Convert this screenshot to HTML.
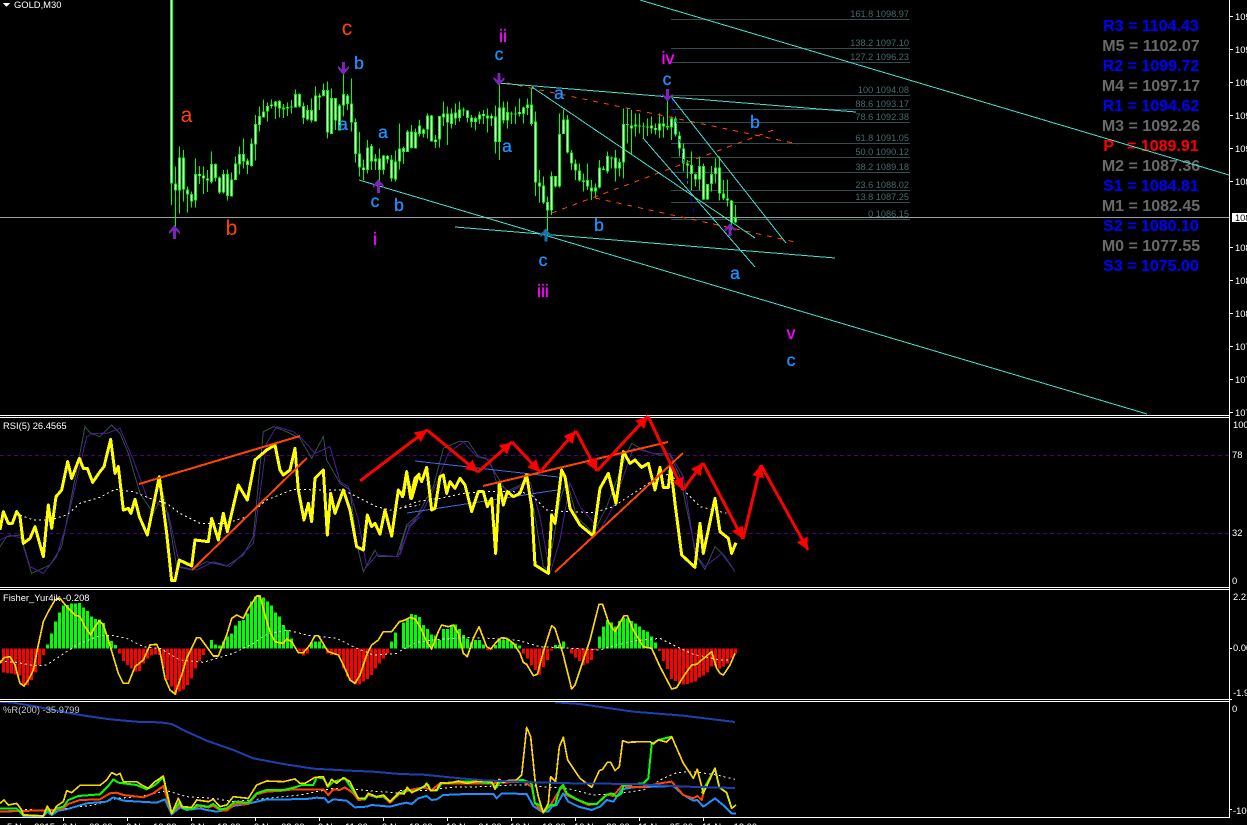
<!DOCTYPE html>
<html><head><meta charset="utf-8"><title>GOLD,M30</title>
<style>
html,body{margin:0;padding:0;background:#000;overflow:hidden}
svg{display:block;position:absolute;left:0;top:0}
text{font-family:"Liberation Sans",sans-serif}
.s{font-size:9.4px;fill:#fff}
.f{font-size:9.2px;fill:#466a6a;text-anchor:end}
.o{font-size:21px;fill:#ff4500;text-anchor:middle}
.b{font-size:17.5px;fill:#1e90ff;stroke:#1e90ff;stroke-width:.35px;text-anchor:middle}
.m{font-size:17.5px;fill:#ff00ff;stroke:#ff00ff;stroke-width:.35px;text-anchor:middle}
.p{font-size:16px;font-weight:bold;text-anchor:middle}
.g{fill:#696969}.u{fill:#0000ff}
</style></head><body>
<svg width="1247" height="825" viewBox="0 0 1247 825" xmlns="http://www.w3.org/2000/svg" shape-rendering="crispEdges" fill="none">
<defs>
<marker id="h" markerUnits="userSpaceOnUse" markerWidth="14" markerHeight="12" refX="12" refY="6" orient="auto"><path d="M0 0L12 6L0 12Z" fill="#ff0000"/></marker>
</defs>
<rect width="1247" height="825" fill="#000"/>

<!-- fib levels -->
<g stroke="#2f4f4f" stroke-width="1">
<path d="M671 19.5H910M671 48.5H910M671 62.5H910M671 95.5H910M671 109.5H910M671 122.5H910M671 143.5H910M671 157.5H910M671 172.5H910M671 190.5H910M671 202.5H910M671 219.5H910"/>
</g>
<g class="fl">
<text class="f" x="909" y="17">161.8 1098.97</text>
<text class="f" x="909" y="46">138.2 1097.10</text>
<text class="f" x="909" y="60">127.2 1096.23</text>
<text class="f" x="909" y="93">100 1094.08</text>
<text class="f" x="909" y="107">88.6 1093.17</text>
<text class="f" x="909" y="120">78.6 1092.38</text>
<text class="f" x="909" y="141">61.8 1091.05</text>
<text class="f" x="909" y="155">50.0 1090.12</text>
<text class="f" x="909" y="170">38.2 1089.18</text>
<text class="f" x="909" y="188">23.6 1088.02</text>
<text class="f" x="909" y="200">13.8 1087.25</text>
<text class="f" x="909" y="217">0 1086.15</text>
</g>

<!-- pivots -->
<text class="p u" x="1151" y="31">R3 = 1104.43</text>
<text class="p g" x="1151" y="51">M5 = 1102.07</text>
<text class="p u" x="1151" y="71">R2 = 1099.72</text>
<text class="p g" x="1151" y="91">M4 = 1097.17</text>
<text class="p u" x="1151" y="111">R1 = 1094.62</text>
<text class="p g" x="1151" y="131">M3 = 1092.26</text>
<text class="p" style="fill:#ff0000" x="1151" y="151" xml:space="preserve">P   = 1089.91</text>
<text class="p g" x="1151" y="171">M2 = 1087.36</text>
<text class="p u" x="1151" y="191">S1 = 1084.81</text>
<text class="p g" x="1151" y="211">M1 = 1082.45</text>
<text class="p u" x="1151" y="231">S2 = 1080.10</text>
<text class="p g" x="1151" y="251">M0 = 1077.55</text>
<text class="p u" x="1151" y="271">S3 = 1075.00</text>

<!-- price line -->
<path d="M0 217.5H1229" stroke="#98a0a0" stroke-width="1"/>

<!-- candles part 1 -->
<g transform="translate(150.17,0) scale(.33333)">
<path stroke="#00ff00" stroke-width="3" d="M64 0V615M76 500V690M88 440V640M100 450V605M112 560V638M124 575V622M136 475V622M148 498V552M160 500V582M172 510V576M184 454V550M196 490V545M208 530V582M220 510V580M232 508V602M244 518V590M256 470V540M268 440V524M280 415V505M292 475V522M304 415V500M316 345V482M328 320V395M340 298V352M352 308V365M364 298V325M376 303V357M388 300V352M400 312V354M412 308V348M424 300V340M436 268V322M448 280V322M460 308V372M472 315V362M484 295V368M496 260V365M508 280V330M520 250V290M532 245V416M544 265V402M556 295V390M568 312V392M580 210V350M592 282V330M604 235V395M616 355V488M628 396V530M640 478V540M652 420V520M664 432V510M676 462V510M688 445V560M700 465V524M712 465V490M724 465V545M736 452V545M748 370V508M760 440V492M772 390V456M784 375V445M796 385V446M808 360V410M820 385V412M832 340V415M844 345V425M856 405V444M868 348V442M880 305V378M892 320V435M904 325V385M916 310V375M928 305V365M940 322V348M952 330V368M964 345V382M976 350V392M988 335V372M1000 330V372M1012 325V398M1024 340V378M1036 316V460M1048 240V480M1060 305V370M1072 305V385M1084 335V372M1096 320V372M1108 295V350M1120 320V370M1132 295V345M1144 262V378M1156 335V588M1168 510V608M1180 530V612M1192 590V710"/>
<path stroke="#00ff00" stroke-width="9" d="M64 0V550M76 550V572M88 472V572M100 472V568M112 568V584M124 582V605M136 522V602M148 522V528M160 526V536M172 535V542M184 492V546M196 492V534M208 532V578M220 522V578M232 522V588M244 538V590M256 490V540M268 462V494M280 462V484M292 482V495M304 430V498M316 372V434M328 348V375M340 334V352M352 318V335M364 313V318M376 305V320M388 303V326M400 323V328M412 321V326M424 320V322M436 282V322M448 282V320M460 318V354M472 330V358M484 330V362M496 286V365M508 286V292M520 270V288M532 270V398M544 294V402M556 294V362M568 316V392M580 282V316M592 286V312M604 310V368M616 366V462M628 460V502M640 502V510M652 442V510M664 438V484M676 475V485M688 475V510M700 466V510M712 468V478M724 478V536M736 484V538M748 446V485M760 444V456M772 394V456M784 394V444M796 396V446M808 376V402M820 388V402M832 346V388M844 346V424M856 418V426M868 348V418M880 340V352M892 340V368M904 340V372M916 338V356M928 328V354M940 328V332M952 332V354M964 352V366M976 354V366M988 344V358M1000 342V348M1012 346V356M1024 348V356M1036 350V426M1048 322V426M1060 322V362M1072 336V362M1084 340V344M1096 340V344M1108 336V342M1120 322V342M1132 313V324M1144 313V372M1156 364V548M1168 548V560M1180 556V608M1192 606V632"/>
<path stroke="#ffffff" stroke-width="3" d="M64 0V547M76 553V569M88 475V569M100 475V565M112 571V581M124 585V602M136 525V599M148 524V526M160 528V534M172 537V540M184 495V543M196 495V531M208 535V575M220 525V575M232 525V585M244 541V587M256 493V537M268 465V491M280 465V481M292 485V492M304 433V495M316 375V431M328 351V372M340 337V349M352 321V332M364 315V316M376 308V317M388 306V323M400 325V326M412 323V324M436 285V319M448 285V317M460 321V351M472 333V355M484 333V359M496 289V362M508 288V290M520 273V285M532 273V395M544 297V399M556 297V359M568 319V389M580 285V313M592 289V309M604 313V365M616 369V459M628 463V499M640 504V508M652 445V507M664 441V481M676 478V482M688 478V507M700 469V507M712 470V476M724 481V533M736 487V535M748 449V482M760 447V453M772 397V453M784 397V441M796 399V443M808 379V399M820 391V399M832 349V385M844 349V421M856 420V424M868 351V415M880 343V349M892 343V365M904 343V369M916 341V353M928 331V351M940 330V330M952 335V351M964 355V363M976 357V363M988 347V355M1000 344V346M1012 349V353M1024 350V354M1036 353V423M1048 325V423M1060 325V359M1072 339V359M1108 338V340M1120 325V339M1132 316V321M1144 316V369M1156 367V545M1168 551V557M1180 559V605M1192 609V629"/>
</g>

<!-- candles part 2 -->
<g transform="translate(499.5,0) scale(.33333)">
<path stroke="#00ff00" stroke-width="3" d="M156 515V645M168 528V562M180 340V562M192 328V402M204 345V460M216 450V510M228 478V540M240 490V545M252 520V575M264 490V570M276 540V600M288 550V595M300 480V565M312 498V510M324 455V520M336 470V505M348 450V545M360 475V530M372 325V535M384 325V430M396 330V465M408 340V410M420 340V400M432 368V415M444 355V408M456 350V400M468 370V404M480 340V414M492 350V412M504 290V390M516 350V420M528 350V410M540 395V470M552 430V515M564 480V550M576 455V570M588 520V560M600 470V570M612 490V600M624 552V600M636 498V575M648 475V550M660 470V602M672 540V600M684 538V620M696 600V690M708 615V670"/>
<path stroke="#00ff00" stroke-width="9" d="M156 528V632M168 528V560M180 402V560M192 358V402M204 358V458M216 458V490M228 490V512M240 512V542M252 542V546M264 540V560M276 562V575M288 562V575M300 502V562M312 506V510M324 468V515M336 472V476M348 472V505M360 486V506M372 372V488M384 372V375M396 376V386M408 374V380M420 376V380M432 380V381M444 380V382M456 376V385M468 384V390M480 370V392M492 370V380M504 378V382M516 355V382M528 355V404M540 406V445M552 446V490M564 490V496M576 495V522M588 522V538M600 498V538M612 498V598M624 552V598M636 522V552M648 502V522M660 502V580M672 580V596M684 596V602M696 602V668M708 652V668"/>
<path stroke="#ffffff" stroke-width="3" d="M156 531V629M168 531V557M180 405V557M192 361V399M204 361V455M216 461V487M228 493V509M240 515V539M264 543V557M276 565V572M288 565V572M300 505V559M324 471V512M348 475V502M360 489V503M372 375V485M396 379V383M408 376V378M420 378V378M456 378V383M468 386V388M480 373V389M492 373V377M516 358V379M528 358V401M540 409V442M552 449V487M564 492V494M576 498V519M588 525V535M600 501V535M612 501V595M624 555V595M636 525V549M648 505V519M660 505V577M672 583V593M684 598V600M696 605V665M708 655V665"/>
</g>

<!-- dark blue dashed -->
<path d="M672 100L695 218" stroke="#0000dd" stroke-width="1" stroke-dasharray="4 6"/>

<!-- orange dashed -->
<g stroke="#ff4500" stroke-width="1" stroke-dasharray="5 6">
<path d="M507 83L798 144"/>
<path d="M552 213L776 129"/>
<path d="M595 198L795 242"/>
</g>

<!-- cyan trend lines -->
<g stroke="#40e0d0" stroke-width="1">
<path d="M640 0L1229 175"/>
<path d="M359 180L1147 414"/>
<path d="M455 227L835 258"/>
<path d="M497 83L856 112"/>
<path d="M532 87L755 238"/>
<path d="M643 138L755 267"/>
<path d="M672 98L786 243"/>
</g>

<!-- wave arrows -->
<g transform="translate(150,0) scale(.33333)" fill="#7b24b8">
<path d="M73 675L90 695V702L78 692V717H69V692L57 702V695Z"/>
<path d="M685 537L702 557V564L690 554V579H681V554L669 564V557Z"/>
<path d="M580 225L597 205V198L585 208V186H576V208L564 198V205Z"/>
<path d="M1047 258L1064 238V231L1052 241V219H1043V241L1031 231V238Z"/>
<path fill="#1a6fae" d="M1187 685L1204 705V712L1192 702V725H1183V702L1171 712V705Z"/>
</g>
<g transform="translate(500,0) scale(.33333)" fill="#7b24b8">
<path d="M502 305L519 285V282L507 289V267H498V289L486 282V285Z"/>
<path d="M690 670L707 688V694L695 686V708H686V686L674 694V688Z"/>
</g>

<!-- wave labels -->
<text class="o" x="186.500" y="122">a</text>
<text class="o" x="347" y="35">c</text>
<text class="o" x="231.500" y="235">b</text>
<text class="b" x="359" y="69">b</text>
<text class="b" x="343" y="130">a</text>
<text class="b" x="383" y="138">a</text>
<text class="b" x="375" y="207">c</text>
<text class="b" x="399" y="211">b</text>
<text class="b" x="499" y="60">c</text>
<text class="b" x="507" y="152">a</text>
<text class="b" x="543" y="266">c</text>
<text class="b" x="559" y="99">a</text>
<text class="b" x="599" y="231">b</text>
<text class="b" x="667" y="85">c</text>
<text class="b" x="755" y="128">b</text>
<text class="b" x="735" y="279">a</text>
<text class="b" x="791" y="366">c</text>
<text class="m" x="503" y="42">ii</text>
<text class="m" x="375" y="245">i</text>
<text class="m" x="543" y="297">iii</text>
<text class="m" x="668" y="64">iv</text>
<text class="m" x="791" y="339">v</text>

<text class="s" x="14" y="8">GOLD,M30</text>
<path d="M3 3H10L6.500 7Z" fill="#fff"/>

<!-- separators -->
<path d="M0 415.500H1229M0 417.500H1229M0 587.500H1229M0 589.500H1229M0 699.500H1229M0 701.500H1229M0 817.500H1229M1229.500 0V818" stroke="#fff" stroke-width="1"/>

<!-- RSI levels -->
<path d="M0 455.500H1229M0 533.500H1229" stroke="#4b0082" stroke-width="1" stroke-dasharray="4 3"/>

<!-- RSI thin lines left -->
<g transform="translate(0,410) scale(.33333)">
<polyline stroke="#2f4f4f" stroke-width="3" points="0,410 20,380 60,375 75,425 95,490 150,465 185,410 240,130 255,50 272,70 300,80 335,45 360,70 385,130 420,250 460,310 490,250 510,350 530,470 575,480 620,455 680,468 730,435 760,380 790,65 820,50 860,65 900,85 935,145 970,80 980,150 1020,220 1050,240 1070,400 1090,485 1125,420 1135,440 1190,440 1220,345 1260,310"/>
<polyline stroke="#4b1a96" stroke-width="3" points="0,390 30,375 65,385 90,470 130,490 170,440 200,340 260,80 280,70 320,70 360,55 400,150 440,260 475,280 505,310 540,470 590,480 640,455 690,470 760,400 800,100 830,50 880,65 905,85 945,130 990,110 1020,215 1045,230 1075,330 1100,470 1130,435 1195,440 1230,350 1260,320"/>
<polyline stroke="#fff8dc" stroke-width="3" stroke-dasharray="6 9" points="60,315 100,330 150,330 200,315 240,280 300,262 345,238 400,245 450,265 500,280 540,310 600,340 680,340 740,320 800,270 880,238 960,240 1030,240 1070,260 1130,290 1170,300 1230,290 1260,285"/>
</g>
<g transform="translate(400,410) scale(.33333)">
<polyline stroke="#2f4f4f" stroke-width="3" points="0,420 20,350 40,340 80,265 100,230 130,115 175,95 205,95 235,140 260,145 280,180 320,245 350,230 380,215 400,290 430,470 445,480 480,270 500,210 530,320 580,370 620,290 680,130 695,100 730,120 775,135 810,135 840,200 890,440 915,478 945,410 975,440 1005,485"/>
<polyline stroke="#4b1a96" stroke-width="3" points="0,435 30,345 70,300 110,220 145,130 190,95 230,140 270,150 290,220 330,245 390,215 420,320 450,490 480,390 510,220 540,290 600,360 640,290 670,200 700,115 760,130 810,130 850,200 885,430 915,470 965,430 1005,485"/>
<polyline stroke="#fff8dc" stroke-width="3" stroke-dasharray="6 9" points="0,295 50,275 120,265 190,250 260,245 340,245 390,250 440,300 500,305 580,308 640,290 700,250 760,210 810,190 860,250 900,290 980,310"/>
</g>

<!-- RSI blue trend -->
<g stroke="#4169e1" stroke-width="1">
<path d="M415 461L558 477"/>
<path d="M407 513L557 490"/>
</g>

<!-- RSI yellow -->
<g transform="translate(0,410) scale(.33333)">
<polyline stroke="#ffff00" stroke-width="9" stroke-linejoin="round" points="0,360 10,305 25,340 37,340 50,305 60,320 70,400 90,385 105,350 130,440 145,285 155,355 168,260 185,240 203,155 215,205 238,145 250,175 262,175 278,217 300,185 312,170 332,88 345,190 355,170 370,300 385,295 393,310 405,268 418,320 442,375 478,200 500,370 515,512 525,512 538,450 575,468 585,390 625,395 635,325 655,390 670,310 682,365 715,225 742,270 765,150 800,120 825,105 840,180 850,195 870,180 885,115 895,240 912,330 925,280 935,335 945,205 970,180 982,375 992,250 1005,310 1030,240 1050,300 1070,410 1090,420 1102,315 1115,350 1125,340 1140,372 1155,300 1175,378 1195,240 1208,260 1220,185 1232,265 1245,205 1260,190"/>
</g>
<g transform="translate(400,410) scale(.33333)">
<polyline stroke="#ffff00" stroke-width="9" stroke-linejoin="round" points="0,245 10,255 20,190 35,265 55,195 65,215 80,172 95,300 105,295 120,200 130,195 140,250 150,215 165,235 180,205 195,225 215,305 235,245 250,245 262,290 275,265 287,430 298,220 310,285 322,245 340,260 360,250 380,195 395,290 405,465 445,490 455,315 465,340 485,180 495,200 510,295 540,345 580,378 600,235 625,190 648,280 670,125 690,160 705,150 725,172 745,160 765,240 780,172 790,232 805,232 812,170 825,280 845,435 885,472 900,340 910,430 945,265 960,365 985,385 995,430 1008,398"/>
</g>

<!-- RSI orange trend -->
<g stroke="#ff4500" stroke-width="2">
<path d="M139 484L300 436"/>
<path d="M192 570L307 458"/>
<path d="M483 486L668 442"/>
<path d="M555 572L683 453"/>
</g>

<!-- RSI red arrows -->
<g stroke="#ff0000" stroke-width="3" marker-end="url(#h)">
<path d="M360 481L427 430"/>
<path d="M427 430L478 472"/>
<path d="M478 472L512 442"/>
<path d="M512 442L540 472"/>
<path d="M540 472L576 431"/>
<path d="M576 431L597 471"/>
<path d="M597 471L648 416"/>
<path d="M648 416L683 490"/>
<path d="M683 490L703 463"/>
<path d="M703 463L743 539"/>
<path d="M743 539L761 465"/>
<path d="M761 465L808 550"/>
</g>

<!-- Fisher bars, first block -->
<g transform="translate(1.5,585) scale(.33333)">
<path stroke="#ff0000" stroke-width="9" d="M6 190V262M18 190V264M30 190V266M42 190V268M54 190V272M66 190V302M78 190V300M90 190V285M102 190V262M114 190V240M126 190V210"/>
</g>
<g transform="translate(-.5,585) scale(.33333)">
<path stroke="#ff0000" stroke-width="9" d="M360 190V205M372 190V228M384 190V240M396 190V250M408 190V260M420 190V258M432 190V235M444 190V220M456 190V212M468 190V208M480 190V210M492 190V250M504 190V285M516 190V305M528 190V330M540 190V320M552 190V314M564 190V300M576 190V280M588 190V250M600 190V228M612 190V210M900 190V200M912 190V212M924 190V205M984 190V205M996 190V210M1008 190V210M1020 190V215M1032 190V250M1044 190V275M1056 190V290M1068 190V298M1080 190V298M1092 190V290M1104 190V282M1116 190V270M1128 190V250M1140 190V235M1152 190V220M1164 190V205"/>
<path stroke="#00ff00" stroke-width="9" d="M144 190V178M156 190V146M168 190V110M180 190V82M192 190V62M204 190V60M216 190V56M228 190V56M240 190V54M252 190V68M264 190V78M276 190V95M288 190V102M300 190V104M312 190V114M324 190V150M336 190V168M348 190V180M636 190V165M648 190V178M660 190V182M672 190V170M684 190V155M696 190V145M708 190V122M720 190V108M732 190V105M744 190V85M756 190V50M768 190V35M780 190V35M792 190V38M804 190V50M816 190V62M828 190V82M840 190V95M852 190V120M864 190V135M876 190V160M936 190V172M948 190V170M960 190V170M972 190V182M1176 190V170M1188 190V142"/>
</g>
<g transform="translate(0,585) scale(.33333)">
<polyline stroke="#fff8dc" stroke-width="3" stroke-dasharray="6 9" points="0,228 50,232 100,242 140,240 200,200 240,175 300,152 340,152 380,160 430,185 480,190 540,225 610,232 700,205 760,175 800,148 860,135 930,152 1010,160 1060,185 1120,210 1200,205"/>
<polyline stroke="#ffd700" stroke-width="5" stroke-linejoin="round" points="0,235 12,218 30,215 45,240 60,295 72,303 85,285 100,255 115,180 130,110 145,80 165,45 180,40 200,65 225,90 240,95 255,125 272,150 285,125 298,107 310,120 325,165 340,215 355,265 370,295 385,295 405,245 430,225 450,180 470,178 480,200 495,280 510,315 525,327 545,270 560,220 590,158 600,158 620,185 640,213 655,213 680,150 695,100 710,90 730,100 745,70 770,33 780,33 795,90 810,140 825,170 850,175 860,162 875,170 895,203 910,203 930,180 945,152 955,152 975,185 985,200 1015,210 1030,240 1050,285 1065,295 1080,270 1100,210 1115,180 1135,165 1150,140 1175,140 1200,108"/>
</g>
<!-- Fisher bars, second block -->
<g transform="translate(401.5,585) scale(.33333)">
<path stroke="#00ff00" stroke-width="9" d="M6 190V112M18 190V100M30 190V87M42 190V90M54 190V96M66 190V120M78 190V132M90 190V148M102 190V152M114 190V165M126 190V132M138 190V132M150 190V120M162 190V118M174 190V132M186 190V150M198 190V160M210 190V172M222 190V165M234 190V165M246 190V178M282 190V180M294 190V165M306 190V165M318 190V162M330 190V172M342 190V175M354 190V182M462 190V180M474 190V180M486 190V170M594 190V155M606 190V125M618 190V105M630 190V112M642 190V125M654 190V108M666 190V98M678 190V100M690 190V108M702 190V115M714 190V125M726 190V135M738 190V140M750 190V155M762 190V172"/>
<path stroke="#ff0000" stroke-width="9" d="M258 190V195M270 190V195M366 190V205M378 190V220M390 190V242M402 190V255M414 190V268M426 190V246M438 190V225M450 190V197M510 190V206M522 190V218M534 190V228M546 190V240M558 190V235M570 190V225M582 190V195M774 190V198M786 190V228M798 190V252M810 190V282M822 190V288M834 190V295M846 190V298M858 190V297M870 190V292M882 190V290M894 190V278M906 190V272M918 190V262M930 190V245M942 190V245M954 190V250M966 190V245M978 190V235M990 190V220M1002 190V205"/>
</g>
<g transform="translate(400,585) scale(.33333)">
<polyline stroke="#fff8dc" stroke-width="3" stroke-dasharray="6 9" points="0,198 50,172 100,165 200,157 270,160 350,165 420,185 520,190 600,195 650,180 700,168 780,160 830,185 880,208 960,225 990,225"/>
<polyline stroke="#ffd700" stroke-width="5" stroke-linejoin="round" points="0,110 15,105 30,97 45,102 60,125 80,170 95,192 115,140 125,120 145,125 160,120 175,145 190,205 202,215 220,160 237,125 260,185 272,192 290,170 305,158 320,160 340,175 360,205 370,232 380,238 400,272 412,268 430,200 455,122 465,130 490,210 515,312 525,300 545,240 570,165 597,58 608,58 625,110 645,140 672,92 682,92 700,135 730,185 755,190 780,245 815,312 830,308 850,275 875,240 890,238 905,225 935,200 950,250 960,265 970,270 990,240 1005,205"/>
</g>

<!-- %R -->
<g transform="translate(0,700) scale(.33333)" stroke-linejoin="round">
<polyline stroke="#1e3fb0" stroke-width="6" points="0,5 40,8 110,20 200,38 260,48 330,58 420,66 480,67 515,72 560,95 620,122 700,150 760,175 850,192 940,206 1050,212 1120,215 1200,222"/>
<polyline stroke="#fff8dc" stroke-width="3" stroke-dasharray="6 9" points="60,327 120,330 200,325 280,315 350,295 420,290 500,272 560,290 640,295 700,305 800,295 900,285 1000,265 1060,268 1200,280"/>
<polyline stroke="#1e90ff" stroke-width="6" points="0,335 60,332 70,348 130,348 142,335 155,345 175,332 200,328 260,310 320,305 340,292 370,302 420,305 470,308 495,298 515,343 540,322 560,330 600,325 620,330 650,335 680,330 700,318 740,312 800,298 860,298 920,297 950,293 975,295 985,308 1000,298 1040,302 1065,322 1100,320 1115,315 1170,320 1200,312"/>
<polyline stroke="#ff4500" stroke-width="6" points="0,335 160,330 190,325 205,312 240,300 300,298 330,280 350,278 370,285 430,292 460,280 490,258 515,340 540,315 555,325 580,325 595,318 625,322 640,318 660,330 680,332 705,312 745,312 770,283 800,275 850,272 880,268 900,268 945,268 970,268 985,285 1000,268 1020,270 1035,262 1060,280 1075,300 1095,298 1105,285 1130,292 1150,290 1170,308 1200,280"/>
<polyline stroke="#00ff00" stroke-width="6" points="0,326 50,326 70,345 130,348 142,325 155,342 170,325 190,320 205,300 235,288 300,283 325,258 340,238 355,248 370,250 410,255 440,268 465,255 490,232 515,340 540,305 550,325 580,325 590,315 625,320 640,312 660,328 680,325 705,305 745,308 770,280 800,270 850,270 885,262 905,255 940,255 950,232 970,235 985,260 1000,245 1020,240 1035,235 1055,265 1075,295 1095,298 1105,282 1130,292 1150,288 1170,305 1200,278"/>
<polyline stroke="#ffd700" stroke-width="5" points="0,310 12,300 25,315 50,310 65,330 70,345 130,348 142,318 155,342 170,318 190,305 200,272 215,278 240,256 300,256 320,240 335,218 350,225 360,220 370,245 410,245 425,255 445,265 465,245 490,228 515,340 535,295 545,320 575,322 590,300 625,305 640,298 660,320 680,315 700,290 745,295 770,255 800,243 850,245 885,237 900,250 915,250 945,232 970,230 982,260 995,238 1010,250 1030,233 1050,245 1075,295 1095,295 1105,280 1130,290 1150,285 1170,305 1200,275"/>
</g>
<g transform="translate(400,700) scale(.33333)" stroke-linejoin="round">
<polyline stroke="#fff8dc" stroke-width="3" stroke-dasharray="6 9" points="0,272 80,272 150,262 250,260 340,255 390,255 420,260 500,265 580,285 660,280 730,270 790,235 830,218 880,215 950,225 1005,238"/>
<polyline stroke="#1e90ff" stroke-width="6" points="0,312 20,308 35,312 55,295 80,288 95,300 110,298 130,285 200,282 280,282 290,295 305,280 380,282 400,318 425,335 445,335 455,320 470,315 490,280 505,305 535,320 575,330 600,320 620,300 640,305 665,268 700,262 820,258 850,285 880,302 892,300 910,320 945,295 975,320 995,340 1008,340"/>
<polyline stroke="#ff4500" stroke-width="6" points="0,282 30,270 70,262 95,270 120,250 200,250 280,250 295,248 370,245 395,260 405,310 430,338 450,318 480,268 490,262 500,285 565,315 590,312 620,283 640,288 665,258 720,262 780,250 815,245 850,285 880,295 892,288 905,300 915,260 945,205 958,262 980,278 995,325"/>
<polyline stroke="#00ff00" stroke-width="6" points="0,282 20,268 40,275 70,260 85,255 92,272 110,272 125,250 180,245 235,245 275,250 290,262 300,245 370,240 395,250 405,310 420,315 430,338 450,315 465,315 480,265 490,255 500,280 530,298 565,312 590,312 620,285 635,280 650,290 665,280 670,255 730,250 745,235 755,132 775,120 815,110"/>
<polyline stroke="#00ff00" stroke-width="6" points="905,280 945,205 958,262 980,278 995,325"/>
<polyline stroke="#ffd700" stroke-width="5" points="0,280 12,282 22,262 35,278 70,262 80,250 92,272 110,270 122,248 145,250 175,243 200,250 235,243 275,245 285,268 297,238 310,248 320,242 350,240 365,225 380,82 392,110 405,240 415,290 430,338 445,310 452,230 467,245 478,140 490,112 503,180 540,235 575,262 598,212 608,208 622,187 632,187 645,212 658,200 668,122 685,128 695,126 750,125 760,132 775,120 800,126 815,110 850,190 880,235 892,208 910,280 945,205 958,262 980,278 995,325 1008,315"/>
<polyline stroke="#1e3fb0" stroke-width="6" points="0,222 70,224 150,232 250,241 400,247 520,250 700,252 860,260 1005,264"/>
<polyline stroke="#1e3fb0" stroke-width="6" points="465,7 540,12 700,35 850,47 1005,66"/>
</g>

<!-- redraw panel borders -->
<path d="M0 699.500H1229M0 701.500H1229M0 587.500H1229M0 589.500H1229M0 817.500H1229" stroke="#fff" stroke-width="1"/>

<!-- indicator labels -->
<text class="s" x="3" y="429">RSI(5) 26.4565</text>
<text class="s" x="3" y="601">Fisher_Yur4ik -0.208</text>
<text class="s" x="3" y="713" style="fill:#c8c8c8">%R(200) -35.9799</text>

<!-- right axis ticks -->
<path stroke="#fff" stroke-width="1" d="M1229 16.500H1233M1229 49.500H1233M1229 82.500H1233M1229 115.500H1233M1229 148.500H1233M1229 181.500H1233M1229 247.500H1233M1229 280.500H1233M1229 313.500H1233M1229 346.500H1233M1229 379.500H1233M1229 412.500H1233M1229 648.500H1232M1229 809.500H1232M1229 699.500H1232"/>
<g>
<text class="s" x="1235" y="20">109</text>
<text class="s" x="1235" y="53">109</text>
<text class="s" x="1235" y="86">109</text>
<text class="s" x="1235" y="119">109</text>
<text class="s" x="1235" y="152">109</text>
<text class="s" x="1235" y="185">108</text>
<text class="s" x="1235" y="251">108</text>
<text class="s" x="1235" y="284">108</text>
<text class="s" x="1235" y="317">108</text>
<text class="s" x="1235" y="350">107</text>
<text class="s" x="1235" y="383">107</text>
<text class="s" x="1235" y="416">107</text>
<text class="s" x="1233" y="428">100</text>
<text class="s" x="1232" y="458">78</text>
<text class="s" x="1232" y="536">32</text>
<text class="s" x="1232" y="584">0</text>
<text class="s" x="1233" y="600">2.21</text>
<text class="s" x="1233" y="651">0.00</text>
<text class="s" x="1233" y="696">-1.9</text>
<text class="s" x="1232" y="712">0</text>
<text class="s" x="1233" y="814">-100</text>
</g>
<rect x="1232" y="213" width="15" height="9" fill="#fff"/>
<text x="1235" y="221" font-size="9.200" fill="#000">108</text>

<!-- time axis -->
<path stroke="#fff" stroke-width="1" d="M63.500 817V821M127.500 817V821M191.500 817V821M255.500 817V821M319.500 817V821M383.500 817V821M447.500 817V821M511.500 817V821M575.500 817V821M639.500 817V821M703.500 817V821"/>
<g>
<text class="s" x="7" y="830">5 Nov 2015</text>
<text class="s" x="62" y="830">6 Nov 03:00</text>
<text class="s" x="126" y="830">6 Nov 10:00</text>
<text class="s" x="190" y="830">6 Nov 18:00</text>
<text class="s" x="254" y="830">9 Nov 03:00</text>
<text class="s" x="318" y="830">9 Nov 11:00</text>
<text class="s" x="382" y="830">9 Nov 18:00</text>
<text class="s" x="446" y="830">10 Nov 04:00</text>
<text class="s" x="510" y="830">10 Nov 12:00</text>
<text class="s" x="574" y="830">10 Nov 20:00</text>
<text class="s" x="638" y="830">11 Nov 05:00</text>
<text class="s" x="702" y="830">11 Nov 13:00</text>
</g>
</svg>
</body></html>
